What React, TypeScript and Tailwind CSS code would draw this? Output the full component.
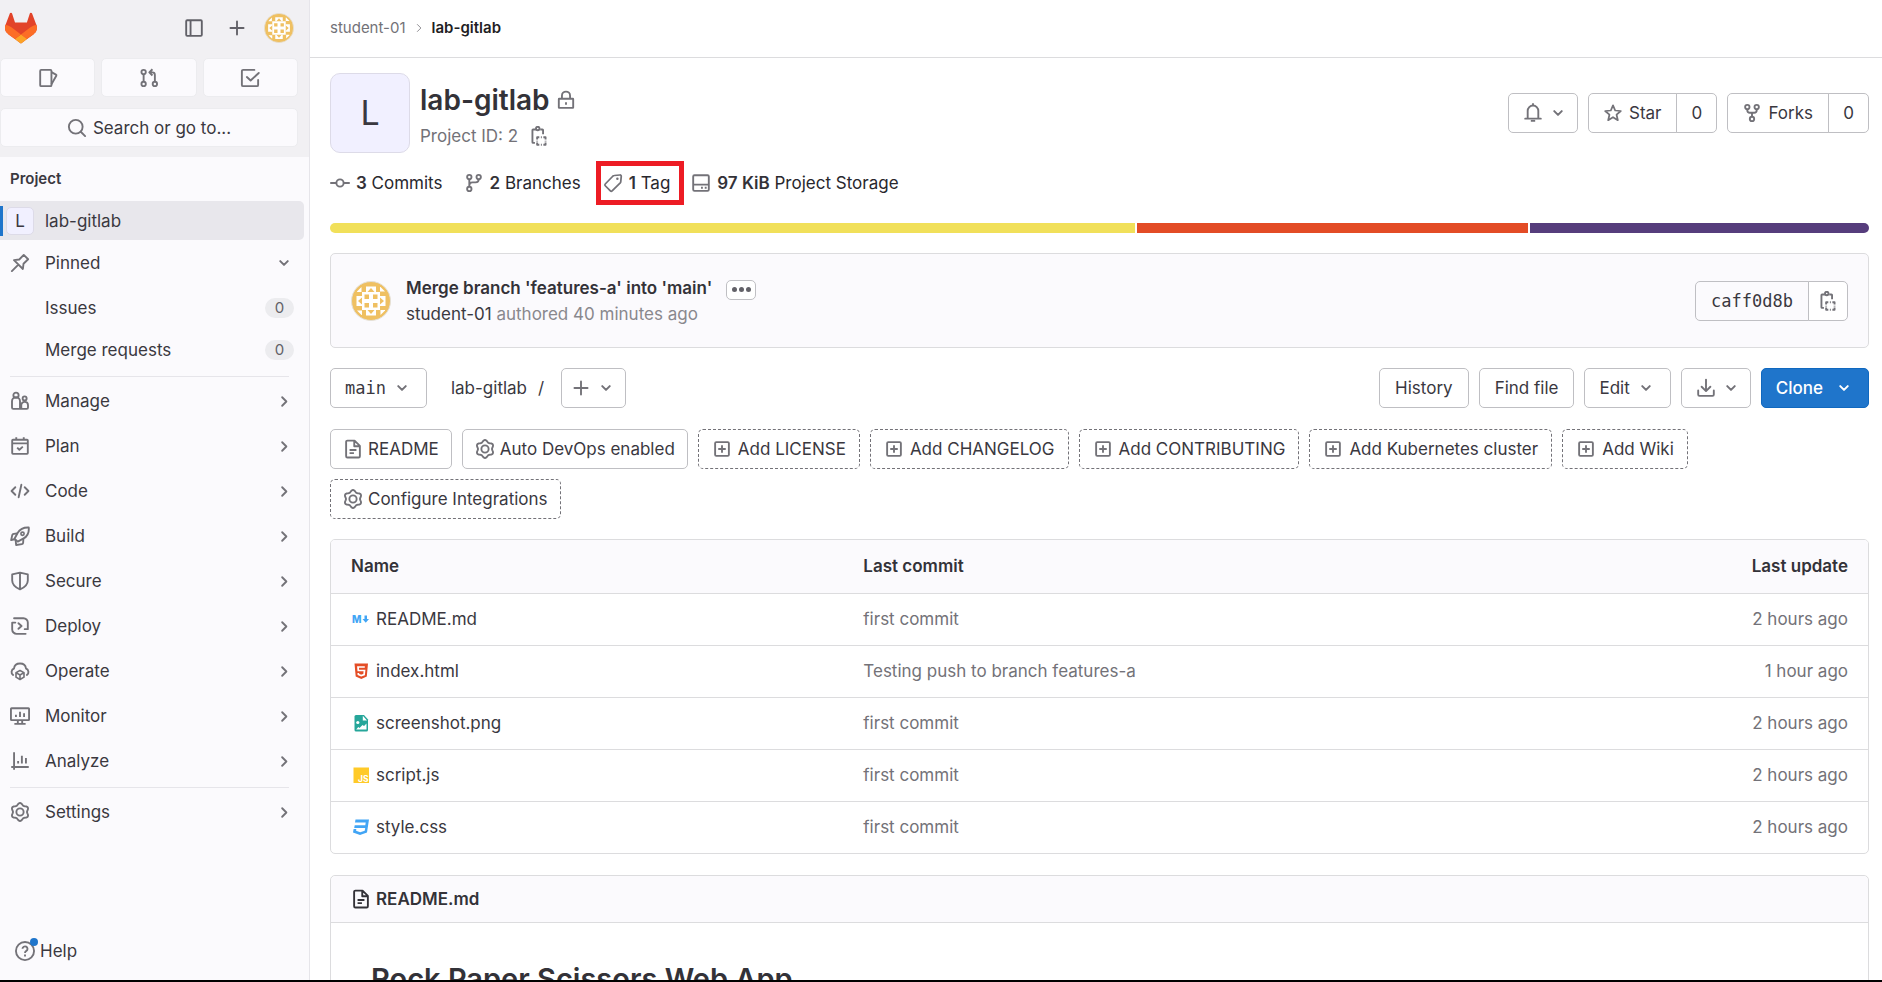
import type { ReactNode } from "react";

type IconProps = { className?: string; children?: ReactNode };

function Icon({ className = "size-5 shrink-0", children }: IconProps) {
  return (
    <svg
      viewBox="0 0 16 16"
      aria-hidden="true"
      className={className}
      fill="none"
      stroke="currentColor"
      strokeWidth={1.5}
      strokeLinejoin="round"
    >
      {children}
    </svg>
  );
}

const gearPoints = Array.from({ length: 72 }, (_, i) => {
  const a = (i * 5 * Math.PI) / 180;
  const wave = Math.cos(6 * (a - Math.PI / 2));
  const r = 6.4 + 0.8 * wave;
  return `${(8 + r * Math.cos(a)).toFixed(2)},${(8 - r * Math.sin(a)).toFixed(2)}`;
}).join(" ");

const GearIcon = () => (
  <Icon>
    <polygon points={gearPoints} />
    <circle cx="8" cy="8" r="2.9" />
  </Icon>
);

const ChevronDown = ({ className = "size-5 shrink-0" }: { className?: string }) => (
  <Icon className={className}>
    <path d="M5 6.5 8 9.500l3-3" strokeWidth={1.6} strokeLinecap="round" />
  </Icon>
);

const ChevronRight = () => (
  <Icon className="size-[15px] shrink-0">
    <path d="M5.5 3.5 10 8l-4.5 4.5" strokeWidth={2} strokeLinecap="round" />
  </Icon>
);

const PlusIcon = () => (
  <Icon>
    <path d="M8 2.75v10.5M2.75 8h10.5" strokeLinecap="round" />
  </Icon>
);

const CopyIcon = () => (
  <Icon>
    <path d="M5.5 2.75H3.25a.5.5 0 0 0-.5.5V13c0 .3.2.5.5.5H4.750M9 2.75h1.75c.3 0 .5.2.5.5V6.500" />
    <circle cx="7" cy="2" r="1.4" />
    <path d="M6.500 10.750V9H8.250M11.500 9h1.750v1.750M13.250 13.250V15H11.500M8.250 15H6.500v-1.750M9.500 9h.75M9.500 15h.75M6.500 11.700v.6M13.250 11.700v.6" />
  </Icon>
);

const DocIcon = () => (
  <Icon>
    <path d="M9.25 1.25H3.5a1 1 0 0 0-1 1v11.5a1 1 0 0 0 1 1h9a1 1 0 0 0 1-1V5.5zM9 1.5v4.25h4.5M5.25 8.75h5.5M5.25 11.25h3.5" />
  </Icon>
);

const PlusSquareIcon = () => (
  <Icon>
    <rect x="2.5" y="2.5" width="11" height="11" rx="0.9" />
    <path d="M8 5v6M5 8h6" />
  </Icon>
);

const StarIcon = () => (
  <Icon>
    <path
      d="m8 1.9 1.75 4.1 4.5.4-3.4 2.95 1 4.4L8 11.4l-3.85 2.35 1-4.4-3.4-2.95 4.5-.4z"
      strokeWidth={1.4}
    />
  </Icon>
);

function Identicon({ className }: { className: string }) {
  return (
    <svg viewBox="0 0 40 40" aria-hidden="true" className={className}>
      <circle cx="20" cy="20" r="19.5" fill="#efc062" stroke="#e4e0d8" />
      <g fill="#fff">
        <path d="M11 11h18v18H11z" />
        {[0, 90, 180, 270].map((deg) => (
          <g key={deg} transform={`rotate(${deg} 20 20)`}>
            <path d="M15 5.500h10V11h-1.500L20 7l-3.500 4H15z" />
            <path d="M6 10.500 10.500 6v5H6z" />
          </g>
        ))}
      </g>
      <path
        fill="#efc062"
        d="M13.500 13.500h4.500v4.500h-4.500zM22 13.500h4.500v4.500H22zM13.500 22h4.500v4.500h-4.500zM22 22h4.500v4.500H22z"
      />
    </svg>
  );
}

const Logo = () => (
  <svg viewBox="0 0 25 24" aria-hidden="true" className="size-8">
    <path
      fill="#E24329"
      d="m24.507 9.5-.034-.09L21.082.562a.896.896 0 0 0-1.694.091l-2.29 7.01H7.825L5.535.653a.898.898 0 0 0-1.694-.09L.451 9.411.416 9.5a6.297 6.297 0 0 0 2.09 7.278l.012.01.03.022 5.16 3.867 2.56 1.935 1.554 1.176a1.051 1.051 0 0 0 1.268 0l1.555-1.176 2.56-1.935 5.197-3.89.014-.01A6.297 6.297 0 0 0 24.507 9.5Z"
    />
    <path
      fill="#FC6D26"
      d="m24.507 9.5-.034-.09a11.44 11.44 0 0 0-4.56 2.051l-7.447 5.632 4.742 3.584 5.197-3.89.014-.01A6.297 6.297 0 0 0 24.507 9.5Z"
    />
    <path
      fill="#FCA326"
      d="m7.707 20.677 2.56 1.935 1.555 1.176a1.051 1.051 0 0 0 1.268 0l1.555-1.176 2.56-1.935-4.743-3.584-4.755 3.584Z"
    />
    <path
      fill="#FC6D26"
      d="M5.01 11.461a11.43 11.43 0 0 0-4.56-2.05L.416 9.5a6.297 6.297 0 0 0 2.09 7.278l.012.01.03.022 5.16 3.867 4.745-3.584-7.444-5.632Z"
    />
  </svg>
);

const navItems: { label: string; icon: ReactNode }[] = [
  {
    label: "Manage",
    icon: (
      <Icon>
        <circle cx="4.8" cy="3.400" r="2.1" />
        <path d="M8 8.200a3.200 3.200 0 0 0-6.400 0v5.050a1 1 0 0 0 1 1h6.150M11.750 8.750a2.600 2.600 0 0 0-2.750 2.500v2a1 1 0 0 0 1 1h3.400a1 1 0 0 0 1-1v-2a2.600 2.600 0 0 0-2.650-2.500zM8 8.200v6" />
        <circle cx="11.7" cy="5.900" r="1.600" />
      </Icon>
    ),
  },
  {
    label: "Plan",
    icon: (
      <Icon>
        <rect x="1.750" y="3" width="12.500" height="11.250" rx="0.600" />
        <path d="M1.750 5.900h12.500M5 1v2M11 1v2M5.750 9.250 7.500 11l2.750-2.500" />
      </Icon>
    ),
  },
  {
    label: "Code",
    icon: (
      <Icon>
        <path d="M4.250 5 1.250 8l3 3M11.750 5l3 3-3 3M9.100 3 6.900 13" strokeLinecap="round" />
      </Icon>
    ),
  },
  {
    label: "Build",
    icon: (
      <Icon>
        <path d="M15 1.200c-4.300-.2-7 1.200-8.800 4.200L3.600 10.200l2.600 2.300 4.700-2.600C14 8.200 15.400 5.500 15 1.200z" />
        <circle cx="10" cy="6.200" r="1.300" strokeWidth={1.300} />
        <path d="M5.700 6 3 6.300c-.6.100-1 .4-1.200 1L.9 11.300l2.700-.7M4.500 11.200l.4 4 4.700-.7c.6-.1.900-.5.900-1.100l.200-3" />
      </Icon>
    ),
  },
  {
    label: "Secure",
    icon: (
      <Icon>
        <path d="M8 1.300 14.250 2.750V7.500c0 3.200-2.300 5.400-6.250 7.200C4.050 12.900 1.750 10.700 1.750 7.500V2.750zM8 1.300v13.400" />
      </Icon>
    ),
  },
  {
    label: "Deploy",
    icon: (
      <Icon>
        <path d="M3.250 1.750h7.500a3.500 3.500 0 0 1 3.500 3.500v5.250H11.750M4.250 5.250h-2.500v5.500a3.500 3.500 0 0 0 3.500 3.500h7.250M6.750 5.750 9.250 8l-2.500 2.250" strokeLinecap="round" />
      </Icon>
    ),
  },
  {
    label: "Operate",
    icon: (
      <Icon>
        <path d="M2.500 11.250A3 3 0 0 1 3.200 6C3.500 3.500 5.300 2 8 2s4.500 1.500 4.800 4a3 3 0 0 1 .7 5.250" strokeLinecap="round" />
        <path d="m8 7.600 3.200 1.700v3.600L8 14.800l-3.200-1.900V9.300zM4.800 9.300 8 11.200l3.200-1.900M8 11.200v3.600" strokeWidth={1.300} />
      </Icon>
    ),
  },
  {
    label: "Monitor",
    icon: (
      <Icon>
        <rect x="0.750" y="1.750" width="14.500" height="9.500" rx="0.500" />
        <path d="M3.500 14.250h9M6.250 11.500V14M9.750 11.500V14M4.750 7v1.750M8 4.500v4.250M11.250 5.750v3" />
      </Icon>
    ),
  },
  {
    label: "Analyze",
    icon: (
      <Icon>
        <path d="M3.250 1v14M1 12.750h14M6.500 8v2M9.500 3.750V10M12.750 5.500V10" />
      </Icon>
    ),
  },
];

function NavRow({ label, icon }: { label: string; icon: ReactNode }) {
  return (
    <li>
      <button type="button" className="flex h-10 w-full items-center gap-[15px] pl-[10px] pr-[17px] text-left">
        <span className="text-[#737278]">{icon}</span>
        <span className="flex-1">{label}</span>
        <span className="text-[#737278]">
          <ChevronRight />
        </span>
      </button>
    </li>
  );
}

function SubRow({ label }: { label: string }) {
  return (
    <li>
      <a href="#" className="flex h-[42px] items-center pl-[45px] pr-[15px]">
        <span className="flex-1">{label}</span>
        <span className="flex h-5 w-[29px] items-center justify-center rounded-full bg-[#ececef] text-[15px] text-[#626168]">
          0
        </span>
      </a>
    </li>
  );
}

const shortcut =
  "flex h-[39px] flex-1 items-center justify-center rounded-[5px] border border-[#ececef] bg-[#fbfafd] text-[#737278]";

function Sidebar() {
  return (
    <aside className="flex w-[310px] shrink-0 flex-col border-r border-[#e6e5ea] bg-[#fbfafd] text-[#3a383f]">
      <div className="flex h-[157px] flex-col bg-[#f1f0f3] pr-[11px] pt-[11px]">
        <div className="flex h-[34px] items-center pl-[5px]">
          <a href="#" aria-label="Homepage">
            <Logo />
          </a>
          <div className="ml-auto flex items-center pr-1 text-[#626168]">
            <button type="button" aria-label="Collapse sidebar">
              <Icon>
                <rect x="1.750" y="1.750" width="12.500" height="12.500" rx="0.800" />
                <path d="M5.250 1.750v12.500" />
              </Icon>
            </button>
            <button type="button" aria-label="Create new" className="ml-[23px]">
              <PlusIcon />
            </button>
            <button type="button" aria-label="User menu" className="ml-[17px]">
              <Identicon className="size-[30px]" />
            </button>
          </div>
        </div>
        <div className="mt-[13px] flex gap-[6px]">
          <a href="#" aria-label="Assigned issues" className={shortcut}>
            <Icon>
              <rect x="1.750" y="1.500" width="9" height="13" rx="0.800" />
              <path d="m10.750 3.250 3.600 2a.75.75 0 0 1 .3 1l-3.900 6.750" />
            </Icon>
          </a>
          <a href="#" aria-label="Merge requests" className={shortcut}>
            <Icon>
              <circle cx="3.700" cy="3.250" r="1.750" />
              <circle cx="3.700" cy="12.750" r="1.750" />
              <circle cx="12.700" cy="12.750" r="1.750" />
              <path d="M3.700 5v6M12.700 11V5.500a2 2 0 0 0-2-2H8.500M10.750 1 8.250 3.500 10.750 6" />
            </Icon>
          </a>
          <a href="#" aria-label="To-Do list" className={shortcut}>
            <Icon>
              <path d="M11.500 1.500H2.500a1 1 0 0 0-1 1v11a1 1 0 0 0 1 1h11a1 1 0 0 0 1-1V9.500M5.500 7.250 8.500 10l6.500-6" strokeLinecap="round" />
            </Icon>
          </a>
        </div>
        <button
          type="button"
          className="mt-[11px] flex h-[39px] items-center justify-center gap-[6px] rounded-[5px] border border-[#ececef] bg-[#fbfafd]"
        >
          <span className="text-[#737278]">
            <Icon>
              <circle cx="7" cy="7" r="5.500" />
              <path d="m11 11 3.500 3.500" strokeLinecap="round" />
            </Icon>
          </span>
          Search or go to...
        </button>
      </div>
      <nav aria-label="Project" className="flex-1">
        <h2 className="flex h-11 items-center pl-[10px] text-[15px] font-semibold">Project</h2>
        <a href="#" className="mr-[5px] flex h-[39px] items-center rounded-r-[5px] bg-[#e8e7ec]">
          <span className="h-[30px] w-[3px] bg-[#1f75cb]" />
          <span className="ml-[3px] flex size-[28px] items-center justify-center rounded-[5px] border border-[#dddbe8] bg-[#f1f0ff]">
            L
          </span>
          <span className="ml-[11px]">lab-gitlab</span>
        </a>
        <ul className="pt-[3px]">
          <li>
            <button type="button" className="flex h-10 w-full items-center gap-[15px] pl-[10px] pr-[15px] text-left">
              <span className="text-[#737278]">
                <Icon>
                  <path d="m11 1.500 3.500 3.500-3.700 3.600-.5 4.200L3.200 5.700l4.200-.5zM6.500 9.500l-5 5" strokeLinecap="round" />
                </Icon>
              </span>
              <span className="flex-1">Pinned</span>
              <span className="text-[#737278]">
                <ChevronDown />
              </span>
            </button>
            <ul className="pt-1">
              <SubRow label="Issues" />
              <SubRow label="Merge requests" />
            </ul>
          </li>
        </ul>
        <hr className="ml-[10px] mr-5 mt-[5px] border-[#e6e5ea]" />
        <ul className="mt-1 flex flex-col gap-[5px]">
          {navItems.map((n) => (
            <NavRow key={n.label} {...n} />
          ))}
        </ul>
        <hr className="ml-[10px] mr-5 mt-[6px] border-[#e6e5ea]" />
        <ul className="mt-1">
          <NavRow label="Settings" icon={<GearIcon />} />
        </ul>
      </nav>
      <button type="button" className="mb-[9px] flex h-10 items-center gap-[5px] pl-[15px]">
        <span className="relative text-[#737278]">
          <Icon>
            <circle cx="8" cy="8" r="7.250" />
            <path d="M6 6.250a2 2 0 1 1 3.100 1.700C8.300 8.400 8 8.700 8 9.600" />
            <path d="M8 10.800v1.500" />
          </Icon>
          <span className="absolute -right-[3px] -top-[3px] size-2 rounded-full bg-[#1f75cb]" />
        </span>
        Help
      </button>
    </aside>
  );
}

const btn = "flex h-10 items-center rounded-[5px] border border-[#bfbfc3] bg-white";
const ic = "text-[#737278]";

function CountButton({ icon, label }: { icon: ReactNode; label: string }) {
  return (
    <div className="flex">
      <button
        type="button"
        className="flex h-10 items-center gap-[6px] rounded-l-[5px] border border-[#bfbfc3] pl-[14px] pr-[15px]"
      >
        <span className={ic}>{icon}</span>
        {label}
      </button>
      <a
        href="#"
        className="-ml-px flex h-10 w-[41px] items-center justify-center rounded-r-[5px] border border-[#bfbfc3]"
      >
        0
      </a>
    </div>
  );
}

function ProjectHeader() {
  return (
    <header className="flex items-center justify-between">
      <div className="flex h-20 gap-[10px]">
        <span className="flex size-20 items-center justify-center rounded-[10px] border border-[#dddbe8] bg-[#f1f0ff] text-[34px]">
          L
        </span>
        <div className="pt-[9px]">
          <h1 className="flex items-center gap-[6px] text-[28px] leading-[36px] font-semibold text-[#333238]">
            lab-gitlab
            <span className={ic}>
              <Icon>
                <rect x="2.250" y="7" width="11.500" height="7.250" rx="0.300" />
                <path d="M4.750 7V4.500a3.250 3.250 0 0 1 6.500 0V7M8 9.750v2" />
              </Icon>
            </span>
          </h1>
          <p className="flex items-center gap-[11px] leading-[36px] text-[#737278]">
            Project ID: 2
            <button type="button" aria-label="Copy project ID">
              <CopyIcon />
            </button>
          </p>
        </div>
      </div>
      <div className="flex gap-[10px]">
        <button type="button" aria-label="Notifications" className={`${btn} gap-[5px] pl-[14px] pr-[9px] ${ic}`}>
          <Icon>
            <path d="M8 .75v1M3.750 12.250V6.250a4.250 4.250 0 0 1 8.500 0v6M1.750 12.500h12.500" strokeLinecap="round" />
            <path d="M6.250 14.250h3.500" />
          </Icon>
          <ChevronDown />
        </button>
        <CountButton icon={<StarIcon />} label="Star" />
        <CountButton
          label="Forks"
          icon={
            <Icon>
              <circle cx="4.250" cy="3.250" r="1.750" />
              <circle cx="11.750" cy="3.250" r="1.750" />
              <circle cx="8" cy="12.750" r="1.750" />
              <path d="M4.250 5v.75a2 2 0 0 0 2 2h3.500a2 2 0 0 0 2-2V5M8 7.750V11" />
            </Icon>
          }
        />
      </div>
    </header>
  );
}

function Stat({ icon, value, label }: { icon: ReactNode; value: string; label: string }) {
  return (
    <a href="#" className="flex items-center gap-[6px]">
      <span className={ic}>{icon}</span>
      <span>
        <strong className="font-semibold text-[#333238]">{value}</strong> {label}
      </span>
    </a>
  );
}

function Stats() {
  return (
    <div className="mt-2 flex h-11 items-center text-[#28272d]">
      <Stat
        value="3"
        label="Commits"
        icon={
          <Icon>
            <circle cx="8" cy="8" r="2.900" />
            <path d="M.750 8h4.250M11 8h4.250" strokeLinecap="round" />
          </Icon>
        }
      />
      <div className="ml-[21px]">
        <Stat
          value="2"
          label="Branches"
          icon={
            <Icon>
              <circle cx="4.250" cy="3.250" r="1.750" />
              <circle cx="11.750" cy="3.250" r="1.750" />
              <circle cx="4.250" cy="12.750" r="1.750" />
              <path d="M4.250 5v6M11.750 5c0 1.700-.9 2.500-2.500 2.500H6.750c-1.500 0-2.500 1-2.500 2.500" />
            </Icon>
          }
        />
      </div>
      <div className="ml-[15px] flex h-11 items-center border-[5px] border-[#ed1c24] pl-[2px] pr-[9px]">
        <Stat
          value="1"
          label="Tag"
          icon={
            <Icon>
              <path d="m9 2 4.500-.4a1 1 0 0 1 1.100 1.100L14.200 7a1.500 1.500 0 0 1-.4.900l-6.500 6.400a1 1 0 0 1-1.400 0L1.800 10.200a1 1 0 0 1 0-1.400L8 2.400A1.500 1.500 0 0 1 9 2z" strokeWidth={1.400} />
              <circle cx="11.500" cy="4.600" r="1" fill="currentColor" stroke="none" />
            </Icon>
          }
        />
      </div>
      <div className="ml-[7px]">
        <Stat
          value="97 KiB"
          label="Project Storage"
          icon={
            <Icon>
              <rect x="1.750" y="1.750" width="12.500" height="12.500" rx="1" />
              <path d="M1.750 9.250h12.500M8 11.750h1.500M11 11.750h1.500" />
            </Icon>
          }
        />
      </div>
    </div>
  );
}

function LanguageBar() {
  return (
    <div className="mt-[18px] flex h-[10px] gap-[2px] overflow-hidden rounded-full" role="img" aria-label="Languages">
      <span className="w-[52.3%] bg-[#f1e05a]" />
      <span className="w-[25.4%] bg-[#e34c26]" />
      <span className="flex-1 bg-[#563d7c]" />
    </div>
  );
}

function CommitPanel() {
  return (
    <section className="mt-5 flex h-[95px] items-center justify-between rounded-[5px] border border-[#dcdcde] bg-[#fbfafd] px-5">
      <div className="flex items-center gap-[15px]">
        <Identicon className="size-10" />
        <div className="leading-[26px]">
          <p className="flex items-center gap-[14px]">
            <a href="#" className="font-semibold text-[#333238]">
              Merge branch 'features-a' into 'main'
            </a>
            <button
              type="button"
              aria-label="Toggle commit description"
              className="mt-1 flex h-5 w-[30px] items-center justify-center gap-[2px] rounded-[5px] border border-[#bfbfc3] bg-white"
            >
              <span className="size-[5px] rounded-full bg-[#626168]" />
              <span className="size-[5px] rounded-full bg-[#626168]" />
              <span className="size-[5px] rounded-full bg-[#626168]" />
            </button>
          </p>
          <p className="text-[#89888d]">
            <a href="#" className="text-[#3a383f]">
              student-01
            </a>{" "}
            authored 40 minutes ago
          </p>
        </div>
      </div>
      <div className="flex">
        <a
          href="#"
          className="flex h-10 items-center rounded-l-[5px] border border-[#bfbfc3] px-[15px] font-['DejaVu_Sans_Mono',monospace]"
        >
          caff0d8b
        </a>
        <button
          type="button"
          aria-label="Copy commit SHA"
          className={`-ml-px flex h-10 items-center rounded-r-[5px] border border-[#bfbfc3] bg-white px-[9px] ${ic}`}
        >
          <CopyIcon />
        </button>
      </div>
    </section>
  );
}

function TreeControls() {
  return (
    <div className="mt-5 flex items-center justify-between">
      <div className="flex items-center">
        <button type="button" className={`${btn} gap-[6px] px-[14px] font-['DejaVu_Sans_Mono',monospace]`}>
          main
          <span className={ic}>
            <ChevronDown />
          </span>
        </button>
        <a href="#" className="ml-6">
          lab-gitlab
        </a>
        <span className="ml-[11px]">/</span>
        <button type="button" aria-label="Add to tree" className={`${btn} ml-[17px] gap-[5px] px-[9px] ${ic}`}>
          <PlusIcon />
          <ChevronDown />
        </button>
      </div>
      <div className="flex gap-[10px]">
        <a href="#" className={`${btn} px-[15px]`}>
          History
        </a>
        <button type="button" className={`${btn} px-[15px]`}>
          Find file
        </button>
        <button type="button" className={`${btn} gap-[6px] px-[14px]`}>
          Edit
          <span className={ic}>
            <ChevronDown />
          </span>
        </button>
        <button type="button" aria-label="Download" className={`${btn} gap-[5px] pl-[14px] pr-[9px] ${ic}`}>
          <Icon>
            <path d="M8 1.250v9M4.500 7 8 10.500 11.500 7M1.750 10v3.250a1 1 0 0 0 1 1h10.500a1 1 0 0 0 1-1V10" strokeLinecap="round" />
          </Icon>
          <ChevronDown />
        </button>
        <button
          type="button"
          className="flex h-10 items-center gap-[11px] rounded-[5px] border border-[#1068bf] bg-[#1f75cb] px-[14px] font-medium text-white"
        >
          Clone
          <ChevronDown />
        </button>
      </div>
    </div>
  );
}

const pills: { label: string; kind: "doc" | "gear" | "plus"; solid?: boolean }[] = [
  { label: "README", kind: "doc", solid: true },
  { label: "Auto DevOps enabled", kind: "gear", solid: true },
  { label: "Add LICENSE", kind: "plus" },
  { label: "Add CHANGELOG", kind: "plus" },
  { label: "Add CONTRIBUTING", kind: "plus" },
  { label: "Add Kubernetes cluster", kind: "plus" },
  { label: "Add Wiki", kind: "plus" },
  { label: "Configure Integrations", kind: "gear" },
];

const pillIcons = { doc: <DocIcon />, gear: <GearIcon />, plus: <PlusSquareIcon /> };

function Pills() {
  return (
    <ul className="mt-[21px] flex flex-wrap gap-[10px]">
      {pills.map((p) => (
        <li key={p.label}>
          <a
            href="#"
            className={`flex h-10 items-center rounded-[5px] border ${
              p.solid ? "border-[#bfbfc3]" : "border-dashed border-[#737278]"
            } ${p.kind === "plus" ? "gap-[6px] px-[13px]" : "gap-[5px] px-3"}`}
          >
            <span className={ic}>{pillIcons[p.kind]}</span>
            {p.label}
          </a>
        </li>
      ))}
    </ul>
  );
}

const fileIcon = "size-5 shrink-0";

const files: { name: string; commit: string; updated: string; icon: ReactNode }[] = [
  {
    name: "README.md",
    commit: "first commit",
    updated: "2 hours ago",
    icon: (
      <svg viewBox="0 0 20 20" aria-hidden="true" className={fileIcon}>
        <text x="1" y="13.500" fontSize="10" fontWeight="800" fill="#42a5f5">
          M
        </text>
        <path fill="#42a5f5" d="M13.500 6.500h2.500v3.500h2l-3.250 3.750L11.500 10h2z" />
      </svg>
    ),
  },
  {
    name: "index.html",
    commit: "Testing push to branch features-a",
    updated: "1 hour ago",
    icon: (
      <svg viewBox="0 0 20 20" aria-hidden="true" className={fileIcon}>
        <path fill="#e44d26" d="M3.500 2.500h13.500l-1.200 13-5.500 2.500-5.600-2.500z" />
        <path d="M13.800 6H7l.3 3.500h6.200l-.4 4-2.900 1-2.800-1-.1-1.500" fill="none" stroke="#fff" strokeWidth="1.700" />
      </svg>
    ),
  },
  {
    name: "screenshot.png",
    commit: "first commit",
    updated: "2 hours ago",
    icon: (
      <svg viewBox="0 0 20 20" aria-hidden="true" className={fileIcon}>
        <path fill="#26a69a" d="M5 2h8l4 4.500V17a1.500 1.500 0 0 1-1.500 1.500H5A1.500 1.500 0 0 1 3.500 17V3.500A1.500 1.500 0 0 1 5 2z" />
        <path fill="#fff" d="M11.800 2.800V7.500h4.200zM5.200 16.500h10.300v-6l-2.500 2.500-1.500-1-3 3-1.200-1z" />
        <circle cx="6.800" cy="9.500" r="1.600" fill="#fff" />
      </svg>
    ),
  },
  {
    name: "script.js",
    commit: "first commit",
    updated: "2 hours ago",
    icon: (
      <svg viewBox="0 0 20 20" aria-hidden="true" className={fileIcon}>
        <path fill="#ffca28" d="M2.500 2.500H18V18H2.500z" />
        <text x="7" y="16.500" fontSize="8.500" fontWeight="700" fill="#fff">
          JS
        </text>
      </svg>
    ),
  },
  {
    name: "style.css",
    commit: "first commit",
    updated: "2 hours ago",
    icon: (
      <svg viewBox="0 0 20 20" aria-hidden="true" className={fileIcon}>
        <path
          fill="#42a5f5"
          d="M4.500 2.500H18L16 15.500l-7 2.500-7-2.500.600-3.500h2.700l-.2 1.700 4.100 1.500 4.500-1.500.500-2.600H3.200L3.700 8.200h10.600l.4-2.600H4z"
        />
      </svg>
    ),
  },
];

function FileTable() {
  return (
    <div className="mt-5 overflow-hidden rounded-[5px] border border-[#dcdcde]">
      <table className="w-full table-fixed border-collapse">
        <colgroup>
          <col className="w-1/3" />
          <col />
          <col className="w-[18%]" />
        </colgroup>
        <thead>
          <tr className="h-[53px] bg-[#fbfafd] text-left text-[#333238]">
            <th className="pl-5 font-semibold">Name</th>
            <th className="pl-5 font-semibold">Last commit</th>
            <th className="pr-5 text-right font-semibold">Last update</th>
          </tr>
        </thead>
        <tbody className="text-[#737278]">
          {files.map((f) => (
            <tr key={f.name} className="h-[52px] border-t border-[#dcdcde]">
              <td className="pl-5">
                <a href="#" className="flex items-center gap-[5px] text-[#3a383f]">
                  {f.icon}
                  {f.name}
                </a>
              </td>
              <td className="pl-5">
                <a href="#">{f.commit}</a>
              </td>
              <td className="pr-5 text-right">
                <time>{f.updated}</time>
              </td>
            </tr>
          ))}
        </tbody>
      </table>
    </div>
  );
}

function Readme() {
  return (
    <article className="mt-[21px] rounded-t-[5px] border border-[#dcdcde] text-[#333238]">
      <div className="flex h-[47px] items-center gap-[5px] rounded-t-[5px] border-b border-[#dcdcde] bg-[#fbfafd] pl-5 font-semibold">
        <DocIcon />
        <a href="#">README.md</a>
      </div>
      <div className="px-10 pt-9">
        <h1 className="text-[29px] leading-[40px] font-semibold">Rock Paper Scissors Web App</h1>
      </div>
    </article>
  );
}

export default function App() {
  return (
    <div className="flex h-screen overflow-hidden border-b-2 border-black bg-white font-[Inter,'Noto_Sans',sans-serif] text-[17px] leading-6 text-[#3a383f]">
      <Sidebar />
      <div className="min-w-0 flex-1 overflow-hidden">
        <nav
          aria-label="Breadcrumb"
          className="flex h-[58px] items-center gap-2 border-b border-[#dcdcde] pb-[2px] pl-5 text-[15px]"
        >
          <a href="#" className="text-[#737278]">
            student-01
          </a>
          <Icon className="size-[10px] text-[#89888d]">
            <path d="m5 2 6 6-6 6" />
          </Icon>
          <a href="#" className="font-semibold text-[#1f1e24]">
            lab-gitlab
          </a>
        </nav>
        <main className="pl-5 pr-[13px] pt-[15px]">
          <ProjectHeader />
          <Stats />
          <LanguageBar />
          <CommitPanel />
          <TreeControls />
          <Pills />
          <FileTable />
          <Readme />
        </main>
      </div>
    </div>
  );
}
